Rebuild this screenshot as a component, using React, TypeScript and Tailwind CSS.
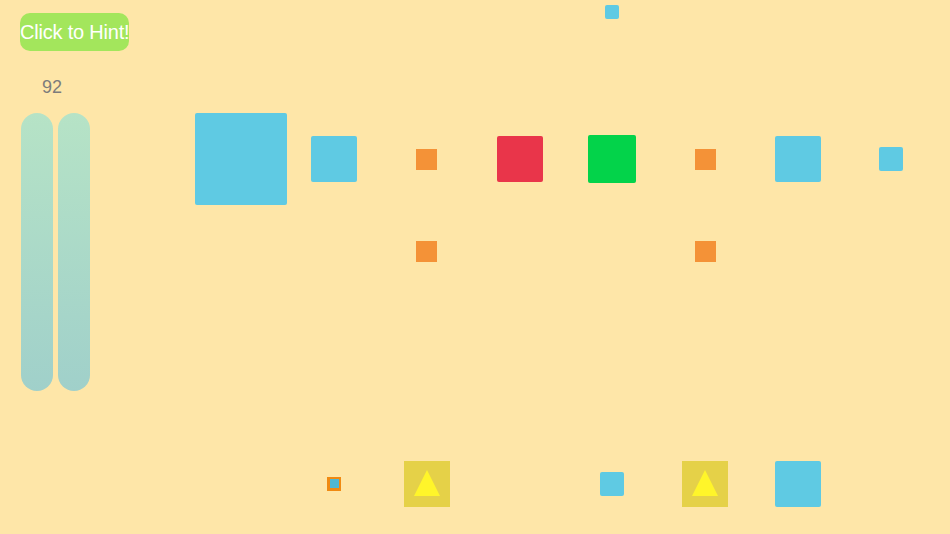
import React from "react";

type Piece =
  | { kind: "blue"; size: number; round?: boolean }
  | { kind: "orange" }
  | { kind: "red" }
  | { kind: "green" }
  | { kind: "trap" }
  | { kind: "warp" }
  | null;

const rowTop: Piece[] = [null, null, null, null, { kind: "blue", size: 14 }, null, null, null];
const rowA: Piece[] = [
  { kind: "blue", size: 92 },
  { kind: "blue", size: 46 },
  { kind: "orange" },
  { kind: "red" },
  { kind: "green" },
  { kind: "orange" },
  { kind: "blue", size: 46 },
  { kind: "blue", size: 24 },
];
const rowB: Piece[] = [null, null, { kind: "orange" }, null, null, { kind: "orange" }, null, null];
const rowC: Piece[] = [
  null,
  { kind: "warp" },
  { kind: "trap" },
  null,
  { kind: "blue", size: 24 },
  { kind: "trap" },
  { kind: "blue", size: 46 },
  null,
];

function Cell({ p }: { p: Piece }) {
  if (!p) return null;
  switch (p.kind) {
    case "blue":
      return (
        <div
          className="rounded-[2px] bg-[#5fcae3]"
          style={{ width: p.size, height: p.size }}
        />
      );
    case "orange":
      return <div className="h-[21px] w-[21px] bg-[#f49237]" />;
    case "red":
      return <div className="h-[46px] w-[46px] rounded-[2px] bg-[#e9354a]" />;
    case "green":
      return <div className="h-[48px] w-[48px] rounded-[2px] bg-[#03d34a]" />;
    case "warp":
      return (
        <div className="flex h-[14px] w-[14px] items-center justify-center bg-[#f08a12]">
          <div className="h-[9px] w-[9px] bg-[#4fb8d3]" />
        </div>
      );
    case "trap":
      return (
        <div className="flex h-[46px] w-[46px] items-center justify-center bg-[#e5d148]">
          <svg width="26" height="27" viewBox="0 0 26 27">
            <polygon points="13,0 26,26 0,26" fill="#fff52a" />
          </svg>
        </div>
      );
  }
}

function Row({ cells, h }: { cells: Piece[]; h: string }) {
  return (
    <div className={`grid grid-cols-[repeat(8,92.75px)] ${h}`}>
      {cells.map((p, i) => (
        <div key={i} className="flex items-center justify-center">
          <Cell p={p} />
        </div>
      ))}
    </div>
  );
}

export default function App() {
  return (
    <div className="flex h-[534px] w-[950px] overflow-hidden bg-[#fee6a8] font-['Liberation_Sans',Arial,sans-serif]">
      <div className="flex w-[195px] flex-col">
        <button className="ml-[20px] mt-[13px] h-[38px] w-[109px] whitespace-nowrap rounded-[10px] bg-[#a3e65c] text-[20px] leading-none tracking-[-0.2px] text-white">
          Click to Hint!
        </button>
        <div className="ml-[42px] mt-[27px] text-[18px] leading-none text-[#7c7c7c]">92</div>
        <div className="ml-[21px] mt-[17px] flex gap-[5px]">
          <div className="h-[278px] w-[32px] rounded-full bg-gradient-to-b from-[#b6e3c6] to-[#a0d0ca]" />
          <div className="h-[278px] w-[32px] rounded-full bg-gradient-to-b from-[#b6e3c6] to-[#a0d0ca]" />
        </div>
      </div>
      <div className="flex flex-col">
        <Row cells={rowTop} h="h-[24px]" />
        <div className="h-[89px]" />
        <Row cells={rowA} h="h-[92px]" />
        <Row cells={rowB} h="h-[93px]" />
        <div className="h-[139px]" />
        <Row cells={rowC} h="h-[93px]" />
      </div>
    </div>
  );
}
